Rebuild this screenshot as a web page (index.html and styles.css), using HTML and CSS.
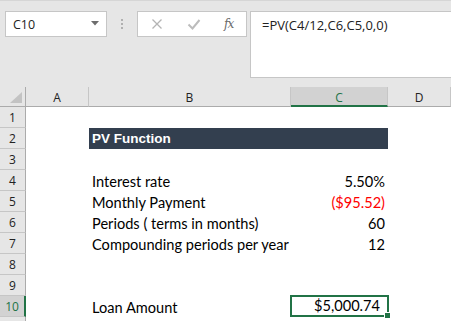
FILE: index.html
```html
<!DOCTYPE html>
<html>
<head>
<meta charset="utf-8">
<link rel="stylesheet" href="styles.css">
</head>
<body>
<div class="toolbar">
  <div class="namebox">
    <span class="ref">C10</span>
    <svg class="caret" width="8" height="5" viewBox="0 0 8 5"><polygon points="0,0 8,0 4,4.5" fill="#6d6d6d"/></svg>
  </div>
  <div class="dots"><i></i><i></i><i></i></div>
  <div class="fxbox">
    <svg class="ico" width="14" height="14" viewBox="0 0 14 14"><path d="M2.5 2.5 L11.5 11.5 M11.5 2.5 L2.5 11.5" stroke="#b4b4b4" stroke-width="1.3" fill="none"/></svg>
    <svg class="ico" width="14" height="14" viewBox="0 0 14 14"><path d="M1.5 7.5 L5.5 11.5 L12.5 3" stroke="#bcbcbc" stroke-width="2" fill="none"/></svg>
    <span class="fx">fx</span>
  </div>
  <div class="formula">=PV(C4/12,C6,C5,0,0)</div>
</div>
<div class="sheet">
  <div class="hd corner"><svg width="14" height="12" viewBox="0 0 14 12"><polygon points="13,0 13,11 1,11" fill="#c3c3c3"/></svg></div>
  <div class="hd col">A</div>
  <div class="hd col">B</div>
  <div class="hd col active-col">C</div>
  <div class="hd col">D</div>

  <div class="hd row">1</div><div class="c"></div><div class="c"></div><div class="c"></div><div class="c"></div>
  <div class="hd row">2</div><div class="c"></div><div class="c title">PV Function</div><div class="c title"></div><div class="c"></div>
  <div class="hd row">3</div><div class="c"></div><div class="c"></div><div class="c"></div><div class="c"></div>
  <div class="hd row">4</div><div class="c"></div><div class="c txt">Interest rate</div><div class="c num">5.50%</div><div class="c"></div>
  <div class="hd row">5</div><div class="c"></div><div class="c txt">Monthly Payment</div><div class="c num neg">($95.52)</div><div class="c"></div>
  <div class="hd row">6</div><div class="c"></div><div class="c txt">Periods ( terms in months)</div><div class="c num">60</div><div class="c"></div>
  <div class="hd row">7</div><div class="c"></div><div class="c txt">Compounding periods per year</div><div class="c num">12</div><div class="c"></div>
  <div class="hd row">8</div><div class="c"></div><div class="c"></div><div class="c"></div><div class="c"></div>
  <div class="hd row">9</div><div class="c"></div><div class="c"></div><div class="c"></div><div class="c"></div>
  <div class="hd row active-row">10</div><div class="c"></div><div class="c txt">Loan Amount</div><div class="c num sel">$5,000.74<span class="handle"></span></div><div class="c"></div>
  <div class="hd row"></div><div class="c"></div><div class="c"></div><div class="c"></div><div class="c"></div>
</div>
</body>
</html>
```
FILE: styles.css
```css
html, body {
  margin: 0;
  padding: 0;
  background: #e6e6e6;
  overflow: hidden;
  width: 451px;
  height: 321px;
}
.toolbar {
  height: 87px;
  box-sizing: border-box;
  border-top: 1px solid #d6d6d6;
  padding-top: 10px;
  display: flex;
  align-items: flex-start;
  font-family: "Open Sans", "Noto Sans", sans-serif;
}
.namebox {
  margin-left: 5px;
  width: 102px;
  height: 26px;
  box-sizing: border-box;
  background: #fff;
  border: 1px solid #c6c6c6;
  display: flex;
  align-items: center;
  justify-content: space-between;
  padding: 0 7px 0 7px;
}
.ref {
  font-size: 12.5px;
  color: #222;
}
.caret { margin-top: -2px; }
.dots {
  margin-left: 14px;
  margin-top: 8px;
  display: flex;
  flex-direction: column;
  gap: 2px;
}
.dots i {
  display: block;
  width: 2px;
  height: 2px;
  background: #b0b0b0;
}
.fxbox {
  margin-left: 14px;
  width: 110px;
  height: 26px;
  box-sizing: border-box;
  background: #fff;
  border: 1px solid #c6c6c6;
  display: flex;
  align-items: center;
  padding-left: 12px;
  gap: 23px;
}
.fx {
  font-family: "DejaVu Serif", "Liberation Serif", serif;
  font-style: italic;
  font-size: 12px;
  color: #6a6a6a;
  letter-spacing: -1px;
}
.formula {
  margin-left: 3px;
  flex: 1;
  height: 67px;
  box-sizing: border-box;
  background: #fff;
  border: 1px solid #c6c6c6;
  border-right: none;
  padding: 4px 0 0 11px;
  font-size: 13px;
  color: #222;
}
.sheet {
  display: grid;
  grid-template-columns: 26px 63px 202px 97px 63px;
  grid-template-rows: 20px repeat(11, 21px);
  background: #fff;
  font-family: "Lato", "Open Sans", sans-serif;
}
.hd {
  background: #e6e6e6;
  box-sizing: border-box;
  font-family: "Open Sans", "Noto Sans", sans-serif;
  font-size: 12px;
  color: #222;
  display: flex;
  align-items: center;
  justify-content: center;
}
.col {
  border-right: 1px solid #c6c6c6;
  border-bottom: 1px solid #ababab;
  padding-top: 1px;
}
.corner {
  border-right: 1px solid #ababab;
  border-bottom: 1px solid #ababab;
  align-items: flex-end;
  justify-content: flex-end;
  padding: 0 2px 2px 0;
}
.corner svg { display: block; }
.row {
  border-right: 1px solid #ababab;
  border-bottom: 1px solid #c6c6c6;
}
.active-col {
  background: #d2d2d2;
  color: #217346;
  border-bottom: 2px solid #217346;
  padding-top: 2px;
}
.active-row {
  background: #d2d2d2;
  color: #217346;
  border-right: 2px solid #217346;
}
.c {
  box-sizing: border-box;
  font-size: 14.6px;
  color: #000;
  display: flex;
  align-items: flex-end;
  padding-bottom: 1px;
  line-height: 17px;
  white-space: nowrap;
}
.txt { padding-left: 3px; }
.num {
  justify-content: flex-end;
  padding-right: 3px;
}
.neg { color: #ff0000; }
.title {
  background: #333f4f;
  color: #fff;
  font-family: "Liberation Sans", Arial, sans-serif;
  font-weight: bold;
  font-size: 13.5px;
  padding-left: 3px;
  align-items: center;
  padding-bottom: 0;
}
.sel {
  position: relative;
  margin: -1px -1px 0 -1px;
  border: 2px solid #217346;
  padding-right: 7px;
}
.handle {
  position: absolute;
  right: -4px;
  bottom: -4px;
  width: 5px;
  height: 5px;
  background: #217346;
  border: 1px solid #fff;
}
```
